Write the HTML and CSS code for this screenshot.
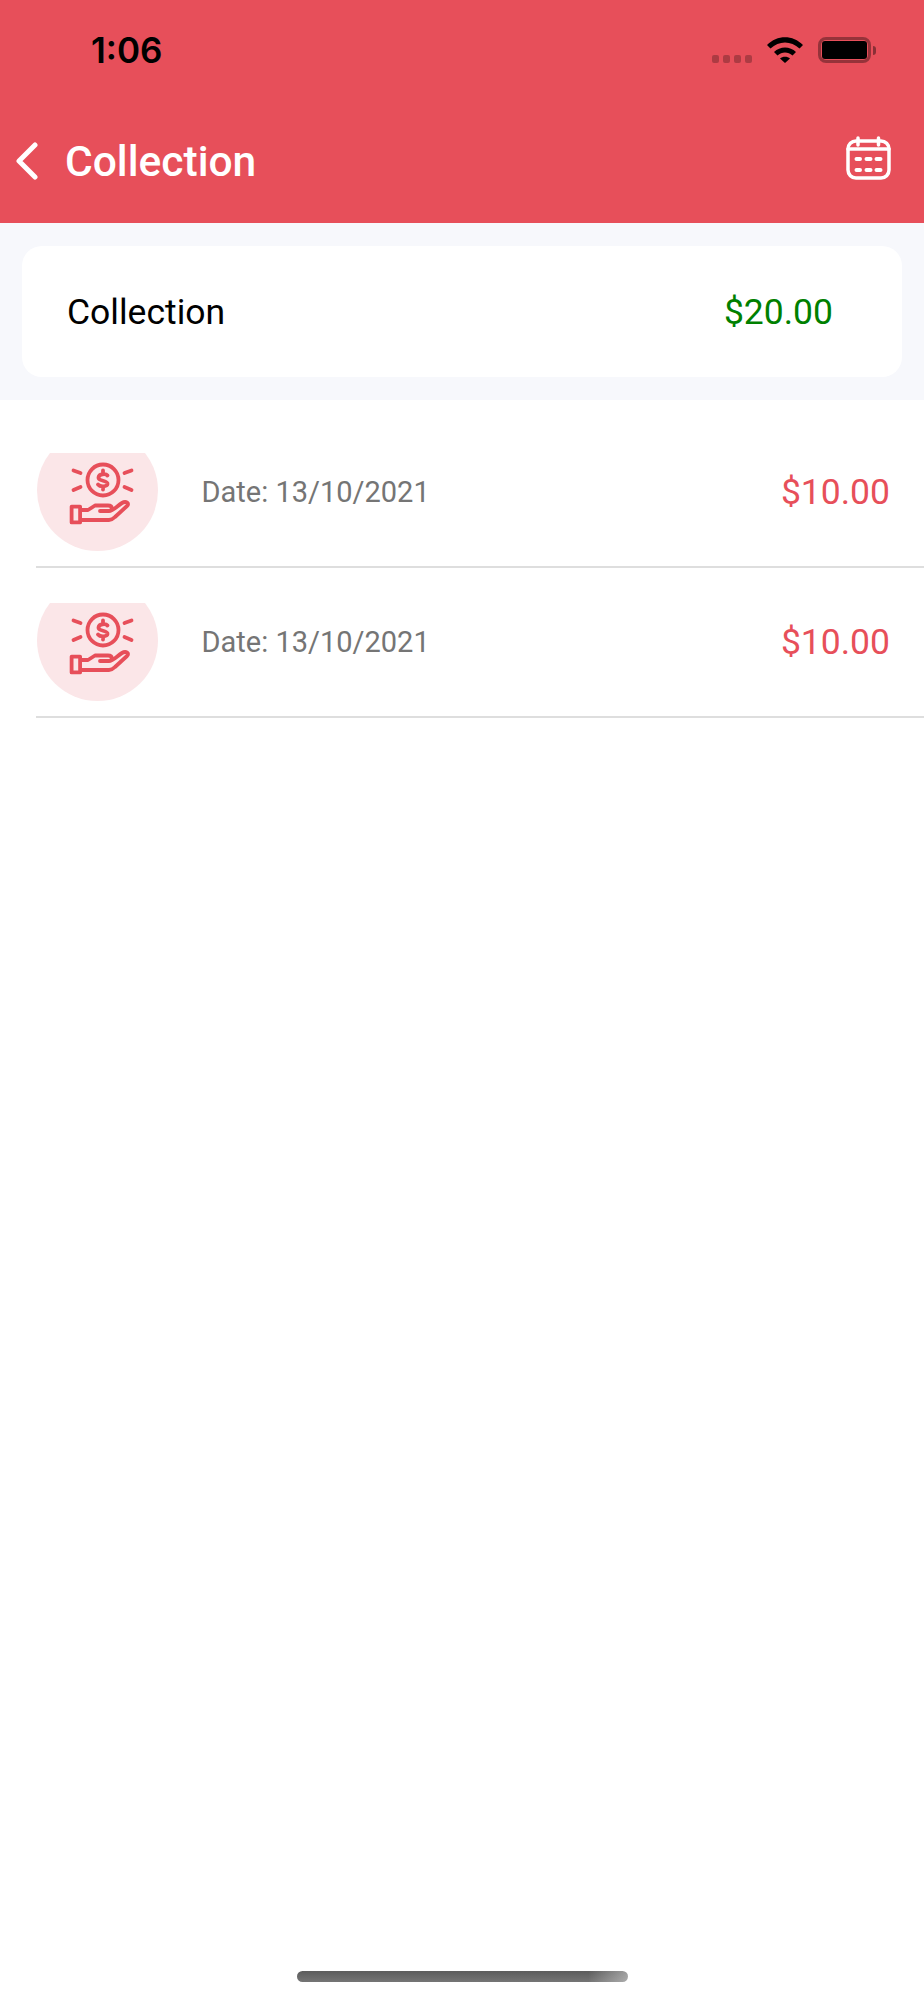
FILE: index.html
```html
<!DOCTYPE html>
<html lang="en">

<head>
    <meta charset="UTF-8">
    <meta name="viewport" content="width=device-width, initial-scale=1.0">
    <title>Collection</title>
    <link rel="stylesheet" href="styles.css">
</head>

<body>
    <div class="screen">
        <header class="header">
            <!-- Status bar -->
            <div class="status">
                <span class="time">1:06</span>
                <div class="status-icons">
                    <div class="signal">
                        <span></span><span></span><span></span><span></span>
                    </div>
                    <svg class="wifi" width="36" height="26" viewBox="0 0 36 26">
                        <path d="M0 8C10 -2.500 26 -2.500 36 8L32.500 11.500C24 3.500 12 3.500 3.500 11.500Z" />
                        <path d="M7 15C13 9 23 9 29 15L25.500 18.500C21 14.500 15 14.500 10.500 18.500Z" />
                        <path d="M13 21.500C15.500 19 20.500 19 23 21.500L18 26Z" />
                    </svg>
                    <div class="battery">
                        <div class="battery-body"><div class="battery-level"></div></div>
                        <div class="battery-nub"></div>
                    </div>
                </div>
            </div>

            <!-- Toolbar -->
            <div class="toolbar">
                <svg class="back" width="24" height="38" viewBox="0 0 24 38">
                    <path d="M20 3L4 19L20 35" />
                </svg>
                <h1 class="title">Collection</h1>
                <svg class="calendar" width="45" height="44" viewBox="0 0 45 44">
                    <rect x="2" y="5" width="41" height="37" rx="8" />
                    <path d="M2 13H43M12 2V9M32.500 2V9" />
                    <path class="calendar-days" d="M10.500 23H14M20.500 23H24.500M30.500 23H34.500M10.500 34H14M20.500 34H24.500M30.500 34H34.500" />
                </svg>
            </div>
        </header>

        <!-- Total -->
        <section class="summary">
            <div class="summary-card">
                <span class="summary-label">Collection</span>
                <span class="summary-value">$20.00</span>
            </div>
        </section>

        <!-- List of collections -->
        <ul class="list">
            <li class="row">
                <svg class="thumb" width="121" height="98" viewBox="0 0 121 98">
                    <circle class="thumb-bg" cx="60.5" cy="37.5" r="60.5" />
                    <g class="thumb-icon">
                        <circle cx="66" cy="27" r="15.5" />
                        <path d="M70.500 22.500C69 20.500 62 20.500 61.500 24.500C61 28.500 71 27 70.500 31C70 34 63 34 61 31.500M66 17.500V20.500M66 33.500V36.500" />
                        <path d="M36.500 17.500L43.500 20M36.500 37L43.500 34M87.500 20L94.500 17.500M87.500 34L94.500 37" />
                        <rect x="34.600" y="53.600" width="8.500" height="15.800" />
                        <path d="M44 57H51L58 52.500H71C76 52.500 76 58 71 58H63M72 58C76 58 80 53 85 50C89 47.500 93 50.500 90 53L78 64C76 66 74 67 72 67H44" />
                    </g>
                </svg>
                <span class="date">Date: 13/10/2021</span>
                <span class="amount">$10.00</span>
            </li>
            <li class="row">
                <svg class="thumb" width="121" height="98" viewBox="0 0 121 98">
                    <circle class="thumb-bg" cx="60.5" cy="37.5" r="60.5" />
                    <g class="thumb-icon">
                        <circle cx="66" cy="27" r="15.5" />
                        <path d="M70.500 22.500C69 20.500 62 20.500 61.500 24.500C61 28.500 71 27 70.500 31C70 34 63 34 61 31.500M66 17.500V20.500M66 33.500V36.500" />
                        <path d="M36.500 17.500L43.500 20M36.500 37L43.500 34M87.500 20L94.500 17.500M87.500 34L94.500 37" />
                        <rect x="34.600" y="53.600" width="8.500" height="15.800" />
                        <path d="M44 57H51L58 52.500H71C76 52.500 76 58 71 58H63M72 58C76 58 80 53 85 50C89 47.500 93 50.500 90 53L78 64C76 66 74 67 72 67H44" />
                    </g>
                </svg>
                <span class="date">Date: 13/10/2021</span>
                <span class="amount">$10.00</span>
            </li>
        </ul>

        <div class="home-bar"></div>
    </div>
</body>

</html>
```

FILE: styles.css
```css
* {
    box-sizing: border-box;
}

body {
    margin: 0;
    background-color: #fff;
    font-family: Roboto, "Liberation Sans", sans-serif;
}

.screen {
    display: flex;
    flex-direction: column;
    height: 2000px;
}

.header {
    height: 223px;
    background-color: #e74f5a;
}

.status {
    display: flex;
    justify-content: space-between;
    height: 100px;
    padding: 37px 48px 0 91px;
}

.time {
    font-family: Inter, sans-serif;
    font-size: 35px;
    font-weight: 600;
    line-height: 26px;
    color: #000;
}

.status-icons {
    display: flex;
    align-items: flex-start;
}

.signal {
    display: flex;
    gap: 4px;
    margin-top: 18px;
    margin-right: 15px;
}

.signal span {
    width: 7px;
    height: 8px;
    border-radius: 2px;
    background-color: rgba(0, 0, 0, 0.25);
}

.wifi {
    margin-right: 15px;
    fill: #000;
}

.battery {
    display: flex;
    align-items: center;
}

.battery-body {
    width: 53px;
    height: 26px;
    padding: 1px;
    border: 3px solid rgba(0, 0, 0, 0.35);
    border-radius: 8px;
}

.battery-level {
    height: 100%;
    border-radius: 3px;
    background-color: #000;
}

.battery-nub {
    width: 3px;
    height: 9px;
    margin-left: 2px;
    border-radius: 0 3px 3px 0;
    background-color: rgba(0, 0, 0, 0.4);
}

.toolbar {
    display: flex;
    align-items: center;
    height: 122px;
    padding: 0 33px 0 15px;
}

.back {
    fill: none;
    stroke: #fff;
    stroke-width: 5;
    stroke-linecap: round;
    stroke-linejoin: round;
}

.title {
    flex: 1;
    margin: 0 0 0 26px;
    font-size: 42.5px;
    font-weight: 500;
    color: #fff;
}

.calendar {
    margin-bottom: 7px;
    fill: none;
    stroke: #fff;
    stroke-width: 3.500;
    stroke-linecap: round;
}

.calendar-days {
    stroke-width: 4;
}

.summary {
    padding: 23px 22px;
    background-color: #f7f8fc;
}

.summary-card {
    display: flex;
    justify-content: space-between;
    align-items: center;
    height: 131px;
    padding: 0 69px 0 45px;
    border-radius: 20px;
    background-color: #fff;
    font-size: 35.5px;
}

.summary-label {
    color: #000;
}

.summary-value {
    color: #008000;
}

.list {
    list-style-type: none;
    margin: 0;
    padding: 18px 0 0 36px;
}

.row {
    display: flex;
    align-items: center;
    height: 150px;
    padding: 0 34px 0 1px;
    border-bottom: 2px solid #dedede;
}

.thumb {
    flex: none;
    align-self: flex-end;
    margin-bottom: 15px;
}

.thumb-bg {
    fill: #fbe6e8;
}

.thumb-icon {
    fill: none;
    stroke: #e74f5a;
    stroke-width: 3.800;
    stroke-linecap: round;
    stroke-linejoin: round;
}

.date {
    flex: 1;
    margin-left: 43.500px;
    font-size: 29px;
    color: #757575;
}

.amount {
    font-size: 35.5px;
    color: #e74f5a;
}

.home-bar {
    width: 331px;
    height: 11px;
    margin: auto auto 18px;
    border-radius: 6px;
    background:
        linear-gradient(to right, rgba(255, 255, 255, 0) 88%, rgba(255, 255, 255, 0.4) 100%),
        linear-gradient(to bottom, #5c5c5c, #757575);
}
```
